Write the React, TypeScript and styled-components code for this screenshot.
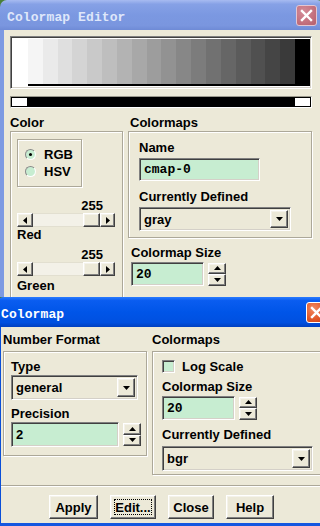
import React from "react";
import styled, { createGlobalStyle, css } from "styled-components";

const FACE = "#ece9d8";
const FIELD = "#c7edd1";
const SANS = `"Liberation Sans", Arial, sans-serif`;
const MONO = `"Liberation Mono", "Courier New", monospace`;

const GlobalStyle = createGlobalStyle`
  html, body { margin: 0; padding: 0; background: ${FACE}; overflow: hidden; }
  #root { width: 320px; height: 526px; }
`;

const sunken = css`
  box-sizing: border-box;
  border: 1px solid;
  border-color: #808080 #ffffff #ffffff #808080;
  box-shadow: inset 1px 1px 0 #404040, inset -1px -1px 0 #d4d0c8;
`;

const raised = css`
  box-sizing: border-box;
  border: 1px solid;
  border-color: #ffffff #404040 #404040 #ffffff;
  box-shadow: inset -1px -1px 0 #808080, inset 1px 1px 0 #f4f2ea;
  background: ${FACE};
`;

const Screen = styled.div`
  width: 320px;
  height: 526px;
  overflow: hidden;
  display: flex;
  flex-direction: column;
  background: #4a7f37;
  font-family: ${SANS};
  font-size: 13px;
  font-weight: bold;
  color: #000;
`;

const Window = styled.div<{ $width: number; $offset: number; $height?: number }>`
  width: ${(p) => p.$width}px;
  margin-left: ${(p) => p.$offset}px;
  ${(p) => (p.$height ? `height: ${p.$height}px; flex-shrink: 0;` : "flex: 1; min-height: 0;")}
  display: flex;
  flex-direction: column;
  overflow: hidden;
  border-radius: 7px 7px 0 0;
`;

const TitleBar = styled.div<{ $active?: boolean }>`
  height: 30px;
  flex-shrink: 0;
  box-sizing: border-box;
  display: flex;
  align-items: center;
  justify-content: space-between;
  padding: 4px ${(p) => (p.$active ? 5 : 7)}px 0 ${(p) => (p.$active ? 4 : 7)}px;
  background: ${(p) =>
    p.$active
      ? "linear-gradient(#2a7bff 0%, #0a5df0 12%, #0055e8 50%, #0050e0 85%, #0040c0 100%)"
      : "linear-gradient(#a7bbf1 0%, #86a1e6 14%, #7b98e1 50%, #7a96df 85%, #6f8bd6 100%)"};
`;

const TitleText = styled.span<{ $active?: boolean }>`
  font-family: ${MONO};
  font-size: 13px;
  font-weight: bold;
  color: ${(p) => (p.$active ? "#ffffff" : "#dfe7fa")};
  letter-spacing: 0.1px;
  white-space: nowrap;
`;

const CloseButton = styled.div<{ $active?: boolean }>`
  width: 21px;
  height: 21px;
  box-sizing: border-box;
  border-radius: 3px;
  border: 1px solid ${(p) => (p.$active ? "#ffffff" : "#e3c6d2")};
  background: ${(p) =>
    p.$active
      ? "radial-gradient(circle at 35% 30%, #f08a63 0%, #e35a2a 55%, #c63b12 100%)"
      : "radial-gradient(circle at 35% 30%, #d48c98 0%, #c3707e 60%, #b45f6d 100%)"};
  display: flex;
  align-items: center;
  justify-content: center;
  margin-top: -4px;
`;

const CloseX = () => (
  <svg width="13" height="13" viewBox="0 0 13 13">
    <path d="M2 2 L11 11 M11 2 L2 11" stroke="#fff" strokeWidth="2.4" strokeLinecap="square" />
  </svg>
);

/* ---------- editor window ---------- */

const EditorBody = styled.div`
  flex: 1;
  background: ${FACE};
  border-left: 4px solid #7d9ae2;
  padding: 6px 0 0 6px;
  display: flex;
  flex-direction: column;
`;

const ColorBar = styled.div`
  ${sunken};
  width: 302px;
  height: 53px;
  padding: 2px 1px 2px 2px;
  display: flex;
  background: #fff;
`;

const Band = styled.div<{ $underline?: boolean }>`
  flex: 1;
  box-sizing: border-box;
  border-bottom: 2px solid ${(p) => (p.$underline ? "#000" : "transparent")};
`;

const MarkerBar = styled.div`
  box-sizing: border-box;
  width: 302px;
  height: 12px;
  margin-top: 7px;
  border: 1px solid;
  border-color: #9a988c #ffffff #ffffff #9a988c;
  background: #000;
  padding: 1px;
  display: flex;
  justify-content: space-between;
`;

const Marker = styled.div`
  width: 15px;
  height: 8px;
  background: #fff;
`;

const Columns = styled.div<{ $top: number; $gap: number }>`
  display: flex;
  gap: ${(p) => p.$gap}px;
  margin-top: ${(p) => p.$top}px;
  align-items: flex-start;
`;

const Column = styled.div<{ $width: number }>`
  width: ${(p) => p.$width}px;
  display: flex;
  flex-direction: column;
`;

const SectionLabel = styled.div<{ $gap: number; $indent?: number }>`
  line-height: 15px;
  height: 15px;
  margin-bottom: ${(p) => p.$gap}px;
  margin-left: ${(p) => p.$indent ?? 0}px;
  white-space: nowrap;
`;

const GroupBox = styled.div<{ $pad: string }>`
  box-sizing: border-box;
  border: 1px solid #aca899;
  box-shadow: inset 1px 1px 0 #fff, 1px 1px 0 #fff;
  padding: ${(p) => p.$pad};
  display: flex;
  flex-direction: column;
  align-items: flex-start;
`;

const RadioGroup = styled.div`
  box-sizing: border-box;
  width: 65px;
  height: 48px;
  border: 1px solid #aca899;
  box-shadow: inset 1px 1px 0 #fff, 1px 1px 0 #fff;
  padding: 6px 0 0 7px;
  display: flex;
  flex-direction: column;
`;

const RadioRow = styled.label`
  height: 17px;
  display: flex;
  align-items: center;
  gap: 8px;
  font-size: 13px;
`;

const RadioDot = styled.span<{ $checked?: boolean }>`
  position: relative;
  width: 11px;
  height: 11px;
  box-sizing: border-box;
  border-radius: 50%;
  border: 1px solid;
  border-color: #8a8a8a #ffffff #ffffff #8a8a8a;
  background: ${FIELD};
  &::after {
    content: "";
    display: ${(p) => (p.$checked ? "block" : "none")};
    position: absolute;
    left: 3px;
    top: 3px;
    width: 3px;
    height: 3px;
    border-radius: 50%;
    background: #000;
  }
`;

const ValueLabel = styled.div<{ $top: number }>`
  width: 86px;
  text-align: right;
  line-height: 14px;
  height: 14px;
  margin-top: ${(p) => p.$top}px;
`;

const Slider = styled.div`
  width: 98px;
  height: 14px;
  display: flex;
  box-sizing: border-box;
`;

const SliderTrack = styled.div`
  flex: 1;
  background: #f3f1e8;
  border-top: 1px solid #e2dfd0;
  border-bottom: 1px solid #e2dfd0;
`;

const SliderButton = styled.div<{ $w: number }>`
  ${raised};
  width: ${(p) => p.$w}px;
  height: 14px;
  display: flex;
  align-items: center;
  justify-content: center;
`;

const FieldLabel = styled.div<{ $top?: number }>`
  line-height: 15px;
  height: 15px;
  margin-top: ${(p) => p.$top ?? 0}px;
  white-space: nowrap;
`;

const TextField = styled.div<{ $w: number; $h: number; $top: number; $mono?: boolean }>`
  ${sunken};
  width: ${(p) => p.$w}px;
  height: ${(p) => p.$h}px;
  margin-top: ${(p) => p.$top}px;
  background: ${FIELD};
  display: flex;
  align-items: center;
  padding-left: 4px;
  font-family: ${(p) => (p.$mono ? MONO : SANS)};
  font-size: 13px;
  font-weight: bold;
`;

const SelectField = styled.div<{ $w: number; $h: number; $top: number }>`
  ${sunken};
  width: ${(p) => p.$w}px;
  height: ${(p) => p.$h}px;
  margin-top: ${(p) => p.$top}px;
  background: ${FACE};
  display: flex;
  align-items: center;
  justify-content: space-between;
  padding: 2px 2px 2px 4px;
`;

const DropButton = styled.div`
  ${raised};
  width: 18px;
  align-self: stretch;
  display: flex;
  align-items: center;
  justify-content: center;
`;

const SpinRow = styled.div<{ $top: number }>`
  display: flex;
  align-items: center;
  gap: 4px;
  margin-top: ${(p) => p.$top}px;
`;

const Spinner = styled.div<{ $h: number }>`
  width: 18px;
  height: ${(p) => p.$h}px;
  display: flex;
  flex-direction: column;
`;

const SpinButton = styled.div`
  ${raised};
  flex: 1;
  display: flex;
  align-items: center;
  justify-content: center;
`;

const CheckRow = styled.div`
  height: 15px;
  display: flex;
  align-items: center;
  gap: 7px;
`;

const CheckBox = styled.span`
  ${sunken};
  width: 13px;
  height: 13px;
  background: ${FIELD};
`;

type Dir = "up" | "down" | "left" | "right";
const Arrow = ({ dir, size = 4 }: { dir: Dir; size?: number }) => {
  const s = size;
  let pts = "";
  let w = s * 2 - 1;
  let h = s;
  if (dir === "down") pts = `0,0 ${w},0 ${w / 2},${h}`;
  if (dir === "up") pts = `0,${h} ${w},${h} ${w / 2},0`;
  if (dir === "left" || dir === "right") {
    [w, h] = [h, w];
    pts = dir === "left" ? `${w},0 ${w},${h} 0,${h / 2}` : `0,0 0,${h} ${w},${h / 2}`;
  }
  return (
    <svg width={w} height={h} viewBox={`0 0 ${w} ${h}`} style={{ display: "block" }}>
      <polygon points={pts} fill="#000" />
    </svg>
  );
};

const ScrollSlider = () => (
  <Slider>
    <SliderButton $w={16}>
      <Arrow dir="left" />
    </SliderButton>
    <SliderTrack />
    <SliderButton $w={17} />
    <SliderButton $w={15}>
      <Arrow dir="right" />
    </SliderButton>
  </Slider>
);

const SpinBox = ({ h }: { h: number }) => (
  <Spinner $h={h}>
    <SpinButton>
      <Arrow dir="up" />
    </SpinButton>
    <SpinButton>
      <Arrow dir="down" />
    </SpinButton>
  </Spinner>
);

const Select = ({ value, w, h, top }: { value: string; w: number; h: number; top: number }) => (
  <SelectField $w={w} $h={h} $top={top}>
    <span>{value}</span>
    <DropButton>
      <Arrow dir="down" />
    </DropButton>
  </SelectField>
);

/* ---------- dialog window ---------- */

const DialogBody = styled.div`
  flex: 1;
  background: ${FACE};
  border-left: 4px solid #0a4fd8;
  border-bottom: 3px solid #1457e0;
  display: flex;
  flex-direction: column;
`;

const DialogContent = styled.div`
  padding: 5px 0 0 2px;
  display: flex;
  flex-direction: column;
`;

const Separator = styled.div`
  margin-top: 10px;
  border-top: 1px solid #aca899;
  border-bottom: 1px solid #fff;
`;

const ButtonRow = styled.div`
  display: flex;
  gap: 12px;
  padding: 8px 0 4px 48px;
`;

const PushButton = styled.div<{ $w: number; $focus?: boolean }>`
  ${raised};
  width: ${(p) => p.$w}px;
  height: 24px;
  display: flex;
  align-items: center;
  justify-content: center;
  font-size: 13px;
  position: relative;
  &::after {
    content: "";
    display: ${(p) => (p.$focus ? "block" : "none")};
    position: absolute;
    inset: 3px;
    border: 1px dotted #000;
  }
`;

const grays = Array.from({ length: 20 }, (_, i) => {
  if (i === 0) return 255;
  if (i === 19) return 0;
  return Math.round(245 - ((i - 1) * (245 - 58)) / 17);
});

export default function App() {
  return (
    <>
      <GlobalStyle />
      <Screen>
        <Window $width={324} $offset={0} $height={297}>
          <TitleBar>
            <TitleText>Colormap Editor</TitleText>
            <CloseButton>
              <CloseX />
            </CloseButton>
          </TitleBar>
          <EditorBody>
            <ColorBar>
              {grays.map((g, i) => (
                <Band key={i} $underline={i > 0 && i < 19} style={{ background: `rgb(${g},${g},${g})` }} />
              ))}
            </ColorBar>
            <MarkerBar>
              <Marker />
              <Marker />
            </MarkerBar>
            <Columns $top={7} $gap={5}>
              <Column $width={113}>
                <SectionLabel $gap={1}>Color</SectionLabel>
                <GroupBox $pad="7px 6px 20px 6px">
                  <RadioGroup>
                    <RadioRow>
                      <RadioDot $checked />
                      RGB
                    </RadioRow>
                    <RadioRow>
                      <RadioDot />
                      HSV
                    </RadioRow>
                  </RadioGroup>
                  <ValueLabel $top={12}>255</ValueLabel>
                  <ScrollSlider />
                  <FieldLabel>Red</FieldLabel>
                  <ValueLabel $top={6}>255</ValueLabel>
                  <ScrollSlider />
                  <FieldLabel $top={2}>Green</FieldLabel>
                </GroupBox>
              </Column>
              <Column $width={184}>
                <SectionLabel $gap={1} $indent={2}>
                  Colormaps
                </SectionLabel>
                <GroupBox $pad="8px 0 6px 10px">
                  <FieldLabel>Name</FieldLabel>
                  <TextField $w={121} $h={23} $top={3} $mono>
                    cmap-0
                  </TextField>
                  <FieldLabel $top={8}>Currently Defined</FieldLabel>
                  <Select value="gray" w={152} h={24} top={3} />
                </GroupBox>
                <SectionLabel $gap={0} $indent={3} style={{ marginTop: 7 }}>
                  Colormap Size
                </SectionLabel>
                <SpinRow $top={2} style={{ marginLeft: 3 }}>
                  <TextField $w={73} $h={24} $top={0} $mono>
                    20
                  </TextField>
                  <SpinBox h={23} />
                </SpinRow>
              </Column>
            </Columns>
          </EditorBody>
        </Window>

        <Window $width={335} $offset={-3}>
          <TitleBar $active>
            <TitleText $active>Colormap</TitleText>
            <CloseButton $active>
              <CloseX />
            </CloseButton>
          </TitleBar>
          <DialogBody>
            <DialogContent>
              <Columns $top={0} $gap={5}>
                <Column $width={144}>
                  <SectionLabel $gap={4}>Number Format</SectionLabel>
                  <GroupBox $pad="7px 0 8px 7px">
                    <FieldLabel>Type</FieldLabel>
                    <Select value="general" w={127} h={25} top={1} />
                    <FieldLabel $top={6}>Precision</FieldLabel>
                    <SpinRow $top={1}>
                      <TextField $w={108} $h={25} $top={0}>
                        2
                      </TextField>
                      <SpinBox h={23} />
                    </SpinRow>
                  </GroupBox>
                </Column>
                <Column $width={172}>
                  <SectionLabel $gap={4}>Colormaps</SectionLabel>
                  <GroupBox $pad="7px 0 3px 9px">
                    <CheckRow>
                      <CheckBox />
                      Log Scale
                    </CheckRow>
                    <FieldLabel $top={5}>Colormap Size</FieldLabel>
                    <SpinRow $top={2}>
                      <TextField $w={73} $h={24} $top={0} $mono>
                        20
                      </TextField>
                      <SpinBox h={23} />
                    </SpinRow>
                    <FieldLabel $top={7}>Currently Defined</FieldLabel>
                    <Select value="bgr" w={151} h={25} top={4} />
                  </GroupBox>
                </Column>
              </Columns>
            </DialogContent>
            <Separator />
            <ButtonRow>
              <PushButton $w={49}>Apply</PushButton>
              <PushButton $w={46} $focus>
                Edit...
              </PushButton>
              <PushButton $w={46}>Close</PushButton>
              <PushButton $w={48}>Help</PushButton>
            </ButtonRow>
          </DialogBody>
        </Window>
      </Screen>
    </>
  );
}
